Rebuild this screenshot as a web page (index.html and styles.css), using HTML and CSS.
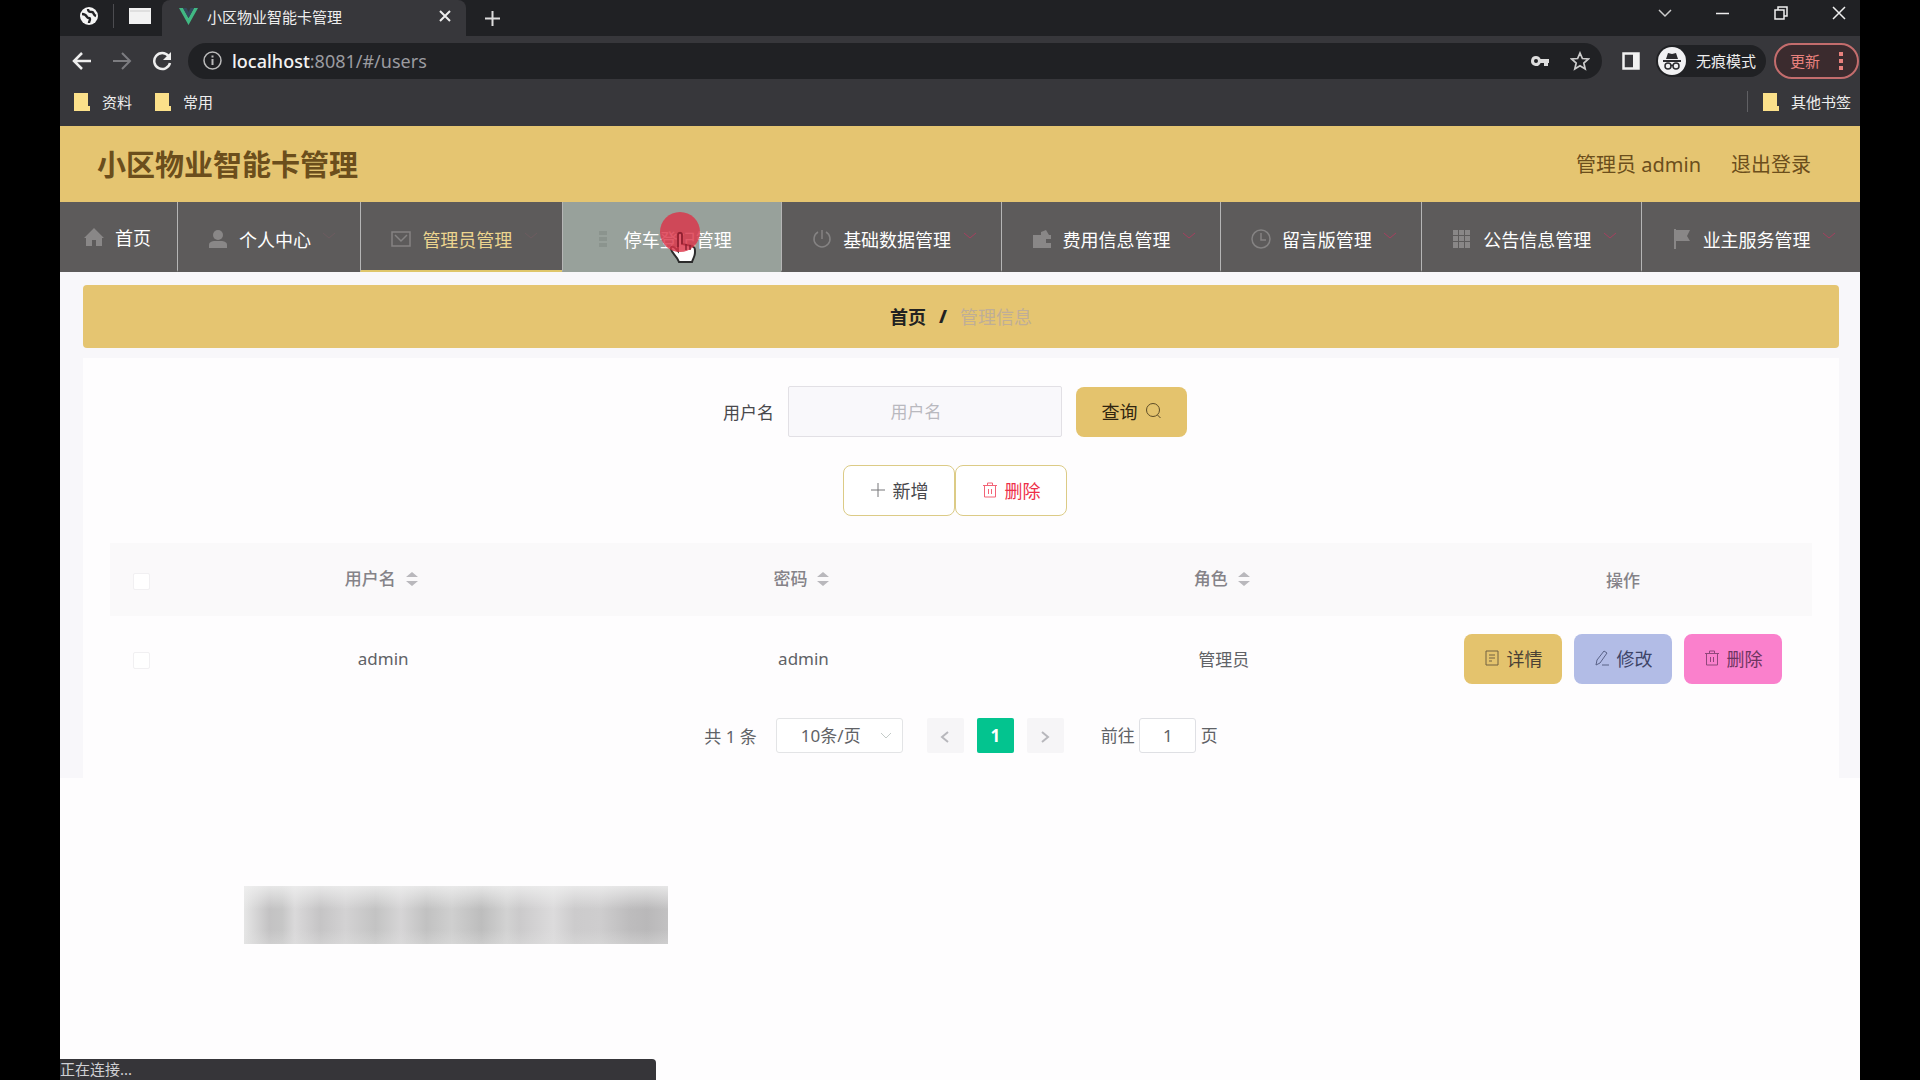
FILE: index.html
```
<!DOCTYPE html>
<html lang="zh-CN">
<head>
    <meta charset="utf-8">
    <title>小区物业智能卡管理</title>
    <link rel="stylesheet" href="styles.css">
</head>
<body>
    <div class="window">
        <div class="tabs">
            <div class="pinned">
                <svg width="18" height="18" viewBox="0 0 18 18"><circle cx="9" cy="9" r="9" fill="#f4f4f4"/><path d="M2 7c3 0 4 1 5 3s3 0 3 2-1 2-1 4M8 2c0 3 2 3 4 3s1 3 4 4" fill="none" stroke="#222225" stroke-width="2.4"/></svg>
                <span class="tab-line"></span>
                <svg width="22" height="16" viewBox="0 0 22 16"><path d="M0 0h22v16H0z" fill="#f2f2f2"/><path d="M1 3h20" stroke="#ccc"/></svg>
            </div>
            <div class="tab">
                <svg width="19" height="17" viewBox="0 0 19 17"><path d="M0 0h4l5.500 10L15 0h4L9.500 17z" fill="#41b883"/><path d="M4 0h3.500l2 4 2-4H15L9.500 10z" fill="#35495e"/></svg>
                <span class="tab-title">小区物业智能卡管理</span>
                <button class="icon-btn" aria-label="关闭标签页"><svg width="12" height="12" viewBox="0 0 12 12"><path d="M1 1l10 10M11 1L1 11" stroke="#eee" stroke-width="2"/></svg></button>
            </div>
            <button class="icon-btn new-tab" aria-label="新标签页"><svg width="15" height="15" viewBox="0 0 15 15"><path d="M7.500 0v15M0 7.500h15" stroke="#ddd" stroke-width="2"/></svg></button>
            <div class="win-btns">
                <button class="icon-btn" aria-label="搜索标签页"><svg width="14" height="14" viewBox="0 0 14 14"><path d="M1 4l6 6 6-6" fill="none" stroke="#ccc" stroke-width="1.500"/></svg></button>
                <button class="icon-btn" aria-label="最小化"><svg width="14" height="14" viewBox="0 0 14 14"><path d="M0 7.500h13" stroke="#eee" stroke-width="1.500"/></svg></button>
                <button class="icon-btn" aria-label="还原"><svg width="14" height="14" viewBox="0 0 14 14"><path d="M1 4h9v9H1zM4 4V1h9v9h-3" fill="none" stroke="#eee" stroke-width="1.500"/></svg></button>
                <button class="icon-btn" aria-label="关闭"><svg width="14" height="14" viewBox="0 0 14 14"><path d="M1 1l12 12M13 1L1 13" stroke="#eee" stroke-width="1.500"/></svg></button>
            </div>
        </div>

        <div class="toolbar">
            <button class="icon-btn" aria-label="后退"><svg width="20" height="20" viewBox="0 0 20 20"><path d="M19 10H3M10 2l-8 8 8 8" fill="none" stroke="#eee" stroke-width="2.500"/></svg></button>
            <button class="icon-btn" aria-label="前进"><svg width="20" height="20" viewBox="0 0 20 20"><path d="M1 10h16M10 2l8 8-8 8" fill="none" stroke="#7c7c80" stroke-width="2"/></svg></button>
            <button class="icon-btn" aria-label="刷新"><svg width="20" height="20" viewBox="0 0 20 20"><path d="M16.500 5A8 8 0 1 0 18 12" fill="none" stroke="#eee" stroke-width="2.500"/><path d="M19 1v8h-8z" fill="#eee"/></svg></button>
            <div class="address">
                <svg width="19" height="19" viewBox="0 0 19 19"><circle cx="9.500" cy="9.500" r="8.500" fill="none" stroke="#bbb" stroke-width="1.500"/><path d="M9.500 8v6M9.500 4.500v2" stroke="#bbb" stroke-width="2"/></svg>
                <span class="url"><b>localhost</b>:8081/#/users</span>
                <svg width="20" height="20" viewBox="0 0 20 20"><path d="M6 5a5 5 0 1 0 4.600 7H14v3h4v-3h1V8h-8.400A5 5 0 0 0 6 5zm0 3a2 2 0 1 1 0 4 2 2 0 0 1 0-4z" fill="#ddd"/></svg>
                <svg class="star" width="20" height="20" viewBox="0 0 20 20"><path d="M10 2l2.400 5.500 6 .5-4.600 4 1.400 6-5.200-3.200L4.800 18l1.400-6-4.600-4 6-.5z" fill="none" stroke="#ccc" stroke-width="1.700"/></svg>
            </div>
            <svg width="18" height="18" viewBox="0 0 18 18"><path d="M1.500 1.500h15v15h-15z" fill="none" stroke="#f2f2f2" stroke-width="2.500"/><path d="M11 1h6v16h-6z" fill="#f2f2f2"/></svg>
            <div class="incognito">
                <svg width="28" height="28" viewBox="0 0 28 28"><circle cx="14" cy="14" r="14" fill="#f1f1f3"/><path d="M10 6l4 1 4-1 2 6H8zM5 13h18v2H5z" fill="#2b2b2f"/><circle cx="10" cy="19" r="3" fill="none" stroke="#2b2b2f" stroke-width="1.500"/><circle cx="18" cy="19" r="3" fill="none" stroke="#2b2b2f" stroke-width="1.500"/><path d="M13 18.500h2" stroke="#2b2b2f" stroke-width="1.500"/></svg>
                <span>无痕模式</span>
            </div>
            <button class="update">更新<svg width="4" height="18" viewBox="0 0 4 18"><path d="M0 0h4v4H0zM0 7h4v4H0zM0 14h4v4H0z" fill="#e8817d"/></svg></button>
        </div>

        <div class="bookmarks">
            <a href="#"><svg width="16" height="18" viewBox="0 0 16 18"><path d="M0 0h14v13h2v5H0z" fill="#fbe08a"/></svg>资料</a>
            <a href="#"><svg width="16" height="18" viewBox="0 0 16 18"><path d="M0 0h14v13h2v5H0z" fill="#fbe08a"/></svg>常用</a>
            <a href="#" class="other"><svg width="16" height="18" viewBox="0 0 16 18"><path d="M0 0h14v13h2v5H0z" fill="#fbe08a"/></svg>其他书签</a>
        </div>

        <header class="header">
            <h1>小区物业智能卡管理</h1>
            <div class="user">
                <span>管理员 admin</span>
                <a href="#">退出登录</a>
            </div>
        </header>

        <nav class="menu">
            <a href="#" class="home">
                <svg class="ico" viewBox="0 0 20 20"><path d="M10 1L0 11h2v8h6v-6h4v6h6v-8h2z"/></svg>首页
            </a>
            <a href="#">
                <svg class="ico" viewBox="0 0 20 20"><circle cx="10" cy="6" r="5"/><path d="M1 19v-3c0-3 3-4 6-4h6c3 0 6 1 6 4v3z"/></svg>个人中心
                <svg class="arrow faint" viewBox="0 0 14 8"><path d="M1 1l6 5 6-5"/></svg>
            </a>
            <a href="#" class="active">
                <svg class="ico line" viewBox="0 0 20 20"><path d="M1 3h18v14H1zM4 6l6 6 6-6"/></svg>管理员管理
                <svg class="arrow faint" viewBox="0 0 14 8"><path d="M1 1l6 5 6-5"/></svg>
            </a>
            <a href="#" class="hover">
                <svg class="ico" viewBox="0 0 20 20"><path d="M6 2h8v4H6zM6 8h8v4H6zM6 14h8v4H6z"/></svg>停车登记管理
                <svg class="arrow none" viewBox="0 0 14 8"><path d="M1 1l6 5 6-5"/></svg>
                <span class="pointer">
                    <svg width="42" height="54" viewBox="0 0 42 54">
                        <path d="M18 24c0-3 4-3 4 0v9l10 2c3 1 3 3 3 6 0 5-2 6-3 10H19c-2-6-7-8-8-13-1-3 3-3 5 0l2 2z" fill="#fff" stroke="#2b2b2b" stroke-width="2"/>
                        <circle cx="20" cy="21" r="20" fill="#dc3549" fill-opacity=".82"/>
                        <path d="M18 36V24c0-3 4-3 4 0v9M26 33v6M30 34v5" fill="none" stroke="#8c1f30" stroke-width="1.500"/>
                    </svg>
                </span>
            </a>
            <a href="#">
                <svg class="ico line" viewBox="0 0 20 20"><path d="M6 3a8 8 0 1 0 8 0M10 1v9"/></svg>基础数据管理
                <svg class="arrow" viewBox="0 0 14 8"><path d="M1 1l6 5 6-5"/></svg>
            </a>
            <a href="#">
                <svg class="ico" viewBox="0 0 20 20"><path d="M1 6h8V3l5-2 3 5h2v4h-5v4h5v5H1z"/></svg>费用信息管理
                <svg class="arrow" viewBox="0 0 14 8"><path d="M1 1l6 5 6-5"/></svg>
            </a>
            <a href="#">
                <svg class="ico line" viewBox="0 0 20 20"><circle cx="10" cy="10" r="9"/><path d="M10 4v7h5"/></svg>留言版管理
                <svg class="arrow" viewBox="0 0 14 8"><path d="M1 1l6 5 6-5"/></svg>
            </a>
            <a href="#">
                <svg class="ico" viewBox="0 0 20 20"><path d="M1 1h5v5H1zM7 1h5v5H7zM13 1h5v5h-5zM1 7h5v5H1zM7 7h5v5H7zM13 7h5v5h-5zM1 13h5v6H1zM7 13h5v6H7zM13 13h5v6h-5z"/></svg>公告信息管理
                <svg class="arrow" viewBox="0 0 14 8"><path d="M1 1l6 5 6-5"/></svg>
            </a>
            <a href="#">
                <svg class="ico" viewBox="0 0 20 20"><path d="M2 0h2v1h14l-3 6 3 5H4v8H2z"/></svg>业主服务管理
                <svg class="arrow" viewBox="0 0 14 8"><path d="M1 1l6 5 6-5"/></svg>
            </a>
        </nav>

        <div class="content">
            <div class="breadcrumb">
                <a href="#">首页</a><b>/</b><span>管理信息</span>
            </div>

            <main class="panel">
                <form class="search">
                    <label for="username">用户名</label>
                    <input type="text" id="username" placeholder="用户名">
                    <button type="button" class="btn gold">查询<svg width="17" height="17" viewBox="0 0 17 17"><circle cx="8" cy="8" r="6.500"/><path d="M12.500 13l3 3"/></svg></button>
                </form>

                <div class="actions">
                    <button class="btn outline"><svg width="16" height="16" viewBox="0 0 16 16"><path d="M8 1v14M1 8h14"/></svg>新增</button>
                    <button class="btn outline red"><svg width="16" height="16" viewBox="0 0 16 16"><path d="M1 3.500h14M5.500 3V1h5v2M2.500 4v11h11V4M6.500 7v5M9.500 7v5"/></svg>删除</button>
                </div>

                <table class="list">
                    <thead>
                        <tr>
                            <th class="check"><input type="checkbox" aria-label="全选"></th>
                            <th>用户名<svg class="sort" viewBox="0 0 12 16"><path d="M6 1l6 5H0zM0 10h12l-6 5z"/></svg></th>
                            <th>密码<svg class="sort" viewBox="0 0 12 16"><path d="M6 1l6 5H0zM0 10h12l-6 5z"/></svg></th>
                            <th>角色<svg class="sort" viewBox="0 0 12 16"><path d="M6 1l6 5H0zM0 10h12l-6 5z"/></svg></th>
                            <th class="ops">操作</th>
                        </tr>
                    </thead>
                    <tbody>
                        <tr>
                            <td class="check"><input type="checkbox" aria-label="选择 admin"></td>
                            <td>admin</td>
                            <td>admin</td>
                            <td>管理员</td>
                            <td>
                                <div class="row-btns">
                                    <button class="btn gold"><svg width="16" height="16" viewBox="0 0 16 16"><path d="M2 1h12v14H2zM5 5h6M5 8h6M5 11h3"/></svg>详情</button>
                                    <button class="btn blue"><svg width="16" height="16" viewBox="0 0 16 16"><path d="M10 1l3 2-7 10-4 2 1-5zM8 15h7"/></svg>修改</button>
                                    <button class="btn pink"><svg width="16" height="16" viewBox="0 0 16 16"><path d="M1 3.500h14M5.500 3V1h5v2M2.500 4v11h11V4M6.500 7v5M9.500 7v5"/></svg>删除</button>
                                </div>
                            </td>
                        </tr>
                    </tbody>
                </table>

                <div class="pager">
                    <span>共 1 条</span>
                    <div class="size">
                        <select aria-label="每页条数"><option>10条/页</option></select>
                        <svg width="12" height="8" viewBox="0 0 12 8"><path d="M1 1l5 5 5-5" fill="none" stroke="#c4cbc8"/></svg>
                    </div>
                    <button class="page" aria-label="上一页"><svg width="10" height="14" viewBox="0 0 10 14"><path d="M8 2L2 7l6 5"/></svg></button>
                    <button class="page current">1</button>
                    <button class="page" aria-label="下一页"><svg width="10" height="14" viewBox="0 0 10 14"><path d="M2 2l6 5-6 5"/></svg></button>
                    <label class="jump">前往 <input type="text" value="1"> 页</label>
                </div>
            </main>
        </div>

        <div class="mosaic"></div>
        <div class="status">正在连接...</div>
    </div>
</body>
</html>
```
FILE: styles.css
```
* {
    box-sizing: border-box;
}

body {
    margin: 0;
    padding: 0 60px;
    background: #000;
    font-family: "Noto Sans", "Noto Sans CJK SC", sans-serif;
    font-size: 17px;
    color: #606266;
}

a {
    color: inherit;
    text-decoration: none;
}

button, input, select {
    font: inherit;
    color: inherit;
}

svg {
    flex: none;
}

.window {
    position: relative;
    display: flex;
    flex-direction: column;
    min-height: 100vh;
    background: #fefdfe;
    overflow: hidden;
}

/* browser bars */
.icon-btn {
    display: flex;
    padding: 0;
    border: none;
    background: none;
}

.tabs {
    display: flex;
    align-items: center;
    height: 36px;
    background: #202124;
    color: #eee;
    font-size: 15px;
}

.pinned {
    display: flex;
    align-items: center;
    gap: 15px;
    width: 102px;
    padding: 0 0 4px 20px;
}

.tab-line {
    width: 1px;
    height: 24px;
    background: #4c4c50;
}

.tab {
    display: flex;
    align-items: center;
    width: 304px;
    height: 36px;
    padding: 0 15px 4px 17px;
    background: #37373b;
    border-radius: 8px 8px 0 0;
}

.tab-title {
    flex: 1;
    margin-left: 9px;
}

.new-tab {
    margin-left: 19px;
}

.win-btns {
    display: flex;
    gap: 44px;
    margin-left: auto;
    padding: 0 14px 10px 0;
}

.toolbar {
    display: flex;
    align-items: center;
    gap: 20px;
    height: 50px;
    padding: 0 1px 1px 12px;
    background: #37373b;
    color: #eee;
}

.address {
    display: flex;
    flex: 1;
    align-items: center;
    height: 36px;
    margin-left: -4px;
    padding: 0 12px 0 15px;
    background: #202124;
    border-radius: 18px;
}

.url {
    flex: 1;
    margin-left: 10px;
    color: #9b9ba0;
    font-size: 18px;
}

.url b {
    color: #f3f3f3;
    font-weight: 500;
}

.star {
    margin-left: 20px;
}

.incognito {
    display: flex;
    align-items: center;
    gap: 10px;
    height: 32px;
    margin-left: -4px;
    padding: 0 10px 0 2px;
    background: #202124;
    border-radius: 16px;
    font-size: 15px;
}

.update {
    display: flex;
    align-items: center;
    justify-content: space-between;
    width: 85px;
    height: 36px;
    margin-left: -12px;
    padding: 0 14px;
    background: #3b2b2e;
    border: 2px solid #c46d6d;
    border-radius: 18px;
    color: #e8817d;
    font-size: 15px;
}

.bookmarks {
    display: flex;
    align-items: center;
    gap: 23px;
    height: 40px;
    padding: 0 9px 9px 14px;
    background: #37373b;
    color: #eee;
    font-size: 15px;
}

.bookmarks a {
    display: flex;
    align-items: center;
    gap: 12px;
}

.bookmarks .other {
    margin-left: auto;
    padding-left: 15px;
    border-left: 1px solid #606064;
}

/* page header */
.header {
    display: flex;
    align-items: center;
    justify-content: space-between;
    height: 76px;
    padding: 0 49px 2px 37px;
    background: #e5c571;
    color: #6b4e1c;
}

.header h1 {
    margin: 0;
    font-size: 29px;
    font-weight: bold;
}

.user {
    display: flex;
    gap: 30px;
    font-size: 20px;
}

.menu {
    display: flex;
    height: 70px;
    background: #5d5b5b;
    color: #fff;
    font-size: 18px;
}

.menu a {
    position: relative;
    display: flex;
    flex: 1 1 auto;
    align-items: center;
    padding: 6px 24px 0 30px;
    border-left: 1px solid #b5b5b5;
    border-bottom: 2px solid transparent;
    white-space: nowrap;
}

.menu .home {
    flex: none;
    padding: 2px 26px 0 24px;
    border-left: none;
}

.menu .active {
    color: #ecd58f;
    border-bottom-color: #dfc66c;
}

.menu .hover {
    background: #98a19b;
}

.ico {
    width: 20px;
    height: 20px;
    margin-right: 11px;
    fill: #898787;
}

.ico.line {
    fill: none;
    stroke: #858383;
    stroke-width: 1.5;
}

.hover .ico {
    fill: #8b948e;
}

.arrow {
    width: 14px;
    height: 8px;
    margin: 0 0 6px auto;
    fill: none;
    stroke: #a5405f;
}

.arrow.faint {
    stroke: #6d5c60;
}

.arrow.none {
    stroke: none;
}

.pointer {
    position: absolute;
    left: 97px;
    top: 9px;
}

/* content */
.content {
    padding: 13px 21px 0 23px;
    background: #f8f7fa;
}

.breadcrumb {
    display: flex;
    align-items: center;
    justify-content: center;
    gap: 13px;
    height: 63px;
    padding-bottom: 2px;
    background: #e5c571;
    border-radius: 4px;
    color: #222;
    font-size: 18px;
    font-weight: bold;
}

.breadcrumb span {
    color: #bfae97;
    font-weight: normal;
}

.panel {
    margin-top: 10px;
    padding: 28px 27px 25px;
    background: #fefdfe;
}

.search, .actions {
    display: flex;
    align-items: center;
    justify-content: center;
    padding-right: 12px;
    color: #48484c;
}

.search {
    gap: 14px;
}

.search input {
    width: 274px;
    height: 51px;
    padding: 0 38px 0 20px;
    background: #f9f8fb;
    border: 1px solid #e2e0e5;
    border-radius: 2px;
    text-align: center;
}

.search input::placeholder {
    color: #b9b9bf;
}

.actions {
    margin: 28px 0 27px;
}

.btn {
    display: flex;
    align-items: center;
    justify-content: center;
    gap: 7px;
    width: 98px;
    height: 50px;
    padding: 0 0 2px;
    border: none;
    border-radius: 8px;
    color: #4a4035;
    font-size: 18px;
}

.btn svg {
    fill: none;
    stroke: currentColor;
    opacity: .75;
}

.gold {
    background: #e4c36d;
}

.blue {
    background: #b2bce6;
    color: #3d4468;
}

.pink {
    background: #fa80cc;
    color: #6d3560;
}

.search .btn {
    width: 111px;
    color: #302510;
}

.btn.outline {
    width: 112px;
    height: 51px;
    background: #fff;
    border: 1px solid #dccb86;
    color: #48484c;
}

.btn.red {
    color: #ee2f49;
}

.list {
    width: 100%;
    border-collapse: collapse;
    table-layout: fixed;
    text-align: center;
}

.list th {
    height: 73px;
    padding: 0 4px 4px 0;
    background: #faf9fa;
    color: #858388;
    font-weight: 500;
}

.list td {
    height: 85px;
    padding: 0;
}

.list .check {
    width: 63px;
    padding: 0;
}

.list .ops {
    width: 378px;
    padding: 0;
}

.check input {
    width: 17px;
    height: 17px;
    margin: 0;
    appearance: none;
    background: #fff;
    border: 1px solid #f1f0f2;
    border-radius: 2px;
    vertical-align: middle;
}

.sort {
    width: 12px;
    height: 16px;
    margin-left: 10px;
    fill: #b9b8bc;
    vertical-align: -2px;
}

.row-btns {
    display: flex;
    justify-content: center;
    gap: 12px;
}

.pager {
    display: flex;
    align-items: center;
    justify-content: center;
    gap: 13px;
    margin-top: 17px;
}

.size {
    display: flex;
    align-items: center;
    width: 127px;
    height: 35px;
    margin: 0 11px 0 6px;
    padding: 0 10px 0 24px;
    background: #fff;
    border: 1px solid #e3e4e6;
    border-radius: 3px;
}

.size select {
    flex: 1;
    padding: 0;
    appearance: none;
    background: none;
    border: none;
}

.page {
    width: 37px;
    height: 35px;
    padding: 0;
    background: #f6f5f7;
    border: none;
    border-radius: 2px;
    font-weight: bold;
}

.page svg {
    fill: none;
    stroke: #b7b7bc;
    stroke-width: 2;
    vertical-align: middle;
}

.page.current {
    background: #03c48f;
    color: #fff;
}

.jump {
    margin-left: 24px;
}

.jump input {
    width: 57px;
    height: 35px;
    padding: 0;
    background: #fff;
    border: 1px solid #dfe0e4;
    border-radius: 3px;
    text-align: center;
}

/* overlays */
.mosaic {
    position: absolute;
    left: 184px;
    bottom: 136px;
    width: 424px;
    height: 58px;
    background:
        linear-gradient(rgba(240, 240, 240, .8), rgba(230, 230, 230, 0) 40%, rgba(220, 220, 220, 0) 75%, rgba(225, 225, 225, .4)),
        linear-gradient(90deg, #e6e6e6, #c3c2c3 6%, #c6c6c6 9%, #dad9da 12%, #c5c4c5 18%, #d3d2d3 24%, #c3c3c3 31%, #d6d5d6 37%, #c1c1c1 43%, #cfcfcf 49%, #bdbdbd 56%, #d2d2d2 62%, #cbcacb 65%, #dcdbdc 73%, #cccbcc 78%, #cecdce 84%, #bdbcbd 91%, #b9b8b9 95%, #c2c1c2);
}

.status {
    position: absolute;
    left: 0;
    bottom: 0;
    width: 596px;
    height: 21px;
    background: #363539;
    border-top-right-radius: 4px;
    color: #d0d0d4;
    font-size: 15px;
    line-height: 21px;
}
```
